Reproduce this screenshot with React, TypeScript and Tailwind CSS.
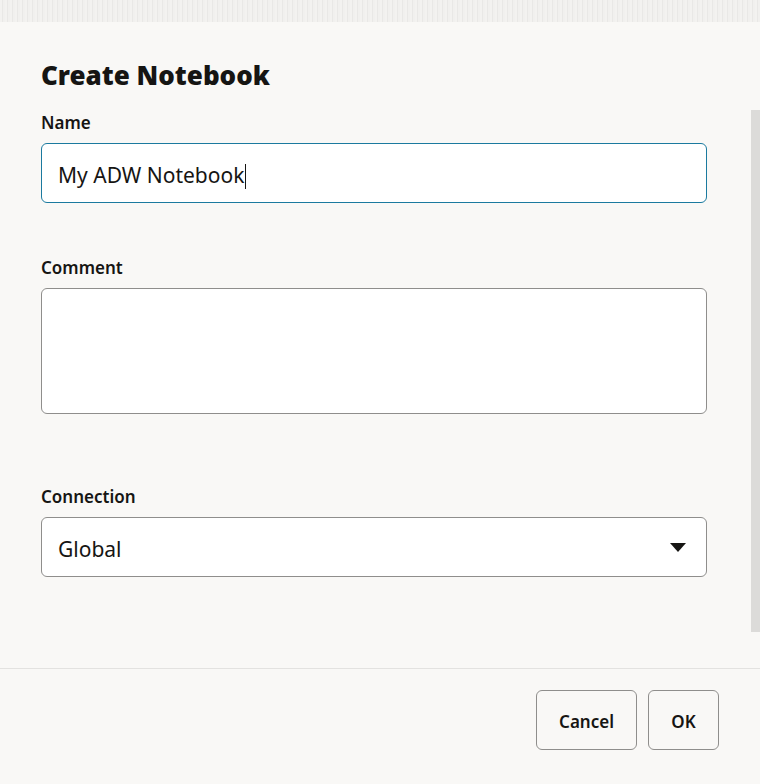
import React from "react";

const font = { fontFamily: '"Noto Sans", "Open Sans", sans-serif' };

function Field({ label, children, className = "" }: { label: string; children: React.ReactNode; className?: string }) {
  return (
    <div className={className}>
      <p className="text-[17px] font-semibold leading-[24px] text-[#161513]">{label}</p>
      <div className="mt-[8px]">{children}</div>
    </div>
  );
}

export default function App() {
  return (
    <div className="flex h-[784px] w-[760px] flex-col overflow-hidden bg-[#f9f8f6] text-[#161513]" style={font}>
      <div className="h-[22px] shrink-0 bg-[#eeedeb] bg-[repeating-linear-gradient(90deg,#f3f2f0_0px,#f3f2f0_2px,#e9e8e6_2px,#e9e8e6_3px,#f1f0ee_3px,#f1f0ee_5px)]" />
      <div className="relative flex-1">
        <div className="absolute right-0 top-[88px] h-[522px] w-[9px] bg-[#dcdbd9]" />
        <div className="pl-[41px] pr-[53px]">
          <h1 className="mt-[37px] text-[26px] font-black leading-[32px]">Create Notebook</h1>
          <Field label="Name" className="mt-[20px]">
            <div className="flex h-[60px] items-center rounded-[6px] border border-[#1b7a9f] bg-white px-[16px]">
              <span className="mt-[6px] text-[21px] text-[#161513]">My ADW Notebook</span>
              <span className="ml-px mt-[6px] h-[25px] w-px bg-[#161513]" />
            </div>
          </Field>
          <Field label="Comment" className="mt-[53px]">
            <div className="mt-px h-[126px] rounded-[6px] border border-[#8f8e8c] bg-white" />
          </Field>
          <Field label="Connection" className="mt-[71px]">
            <div className="flex h-[60px] items-center justify-between rounded-[6px] border border-[#8f8e8c] bg-white pl-[16px] pr-[20px]">
              <span className="mt-[5px] text-[21px]">Global</span>
              <svg width="16" height="9" viewBox="0 0 16 9">
                <path d="M0 0h16L8 9z" fill="#161513" />
              </svg>
            </div>
          </Field>
        </div>
      </div>
      <div className="flex h-[116px] shrink-0 items-start justify-end gap-[11px] border-t border-[#e3e2e0] pr-[41px] pt-[21px]">
        <button className="h-[60px] w-[101px] rounded-[6px] border border-[#8f8e8c] pt-[3px] text-[17px] font-semibold">Cancel</button>
        <button className="h-[60px] w-[71px] rounded-[6px] border border-[#8f8e8c] pt-[3px] text-[17px] font-semibold">OK</button>
      </div>
    </div>
  );
}
